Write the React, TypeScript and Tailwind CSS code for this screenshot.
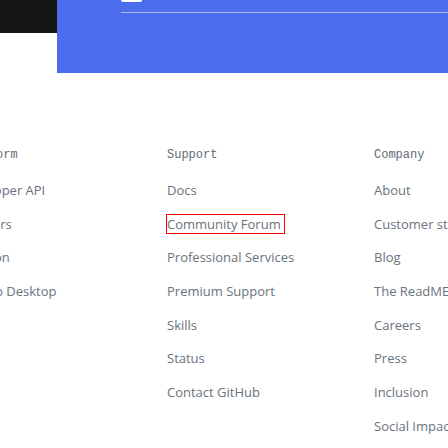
export default function App() {
  const columns = [
    { title: "Platform", links: ["Developer API", "Partners", "Electron", "GitHub Desktop"] },
    {
      title: "Support",
      links: ["Docs", "Community Forum", "Professional Services", "Premium Support", "Skills", "Status", "Contact GitHub"],
    },
    {
      title: "Company",
      links: ["About", "Customer stories", "Blog", "The ReadME Project", "Careers", "Press", "Inclusion", "Social Impact", "Shop"],
    },
  ];

  return (
    <div className="w-[448px] h-[448px] overflow-hidden bg-white relative">
      {/* top banner */}
      <div className="flex items-start">
        <div className="w-[57px] h-[33px] bg-[#161616]" />
        <div className="flex-1 h-[73px] bg-[#4a6ced] pl-[64px]">
          <div className="w-[21px] h-[2px] bg-white rounded-b-sm" />
          <div className="mt-[10px] h-px bg-[#a9b8f5]" />
        </div>
      </div>

      {/* footer links */}
      <footer className="flex ml-[-40px] pt-[72px]" style={{ fontFamily: '"Open Sans", sans-serif' }}>
        {columns.map((col) => (
          <div key={col.title} className="w-[207px] shrink-0 flex flex-col">
            <h3 className="h-[20px] leading-[20px] text-[12px] text-[#626b75] font-['Liberation_Mono',monospace] mb-[15px] whitespace-nowrap">
              {col.title}
            </h3>
            <ul className="flex flex-col gap-[13.7px]">
              {col.links.map((l) => (
                <li key={l} className="h-[20px] leading-[20px] text-[13px] text-[#6a737d] whitespace-nowrap">
                  {l === "Community Forum" ? (
                    <span className="inline-block ml-[-1px] w-[119px] h-[20px] border border-[#ff0000] leading-[18px] overflow-hidden">
                      {l}
                    </span>
                  ) : (
                    l
                  )}
                </li>
              ))}
            </ul>
          </div>
        ))}
      </footer>
    </div>
  );
}
